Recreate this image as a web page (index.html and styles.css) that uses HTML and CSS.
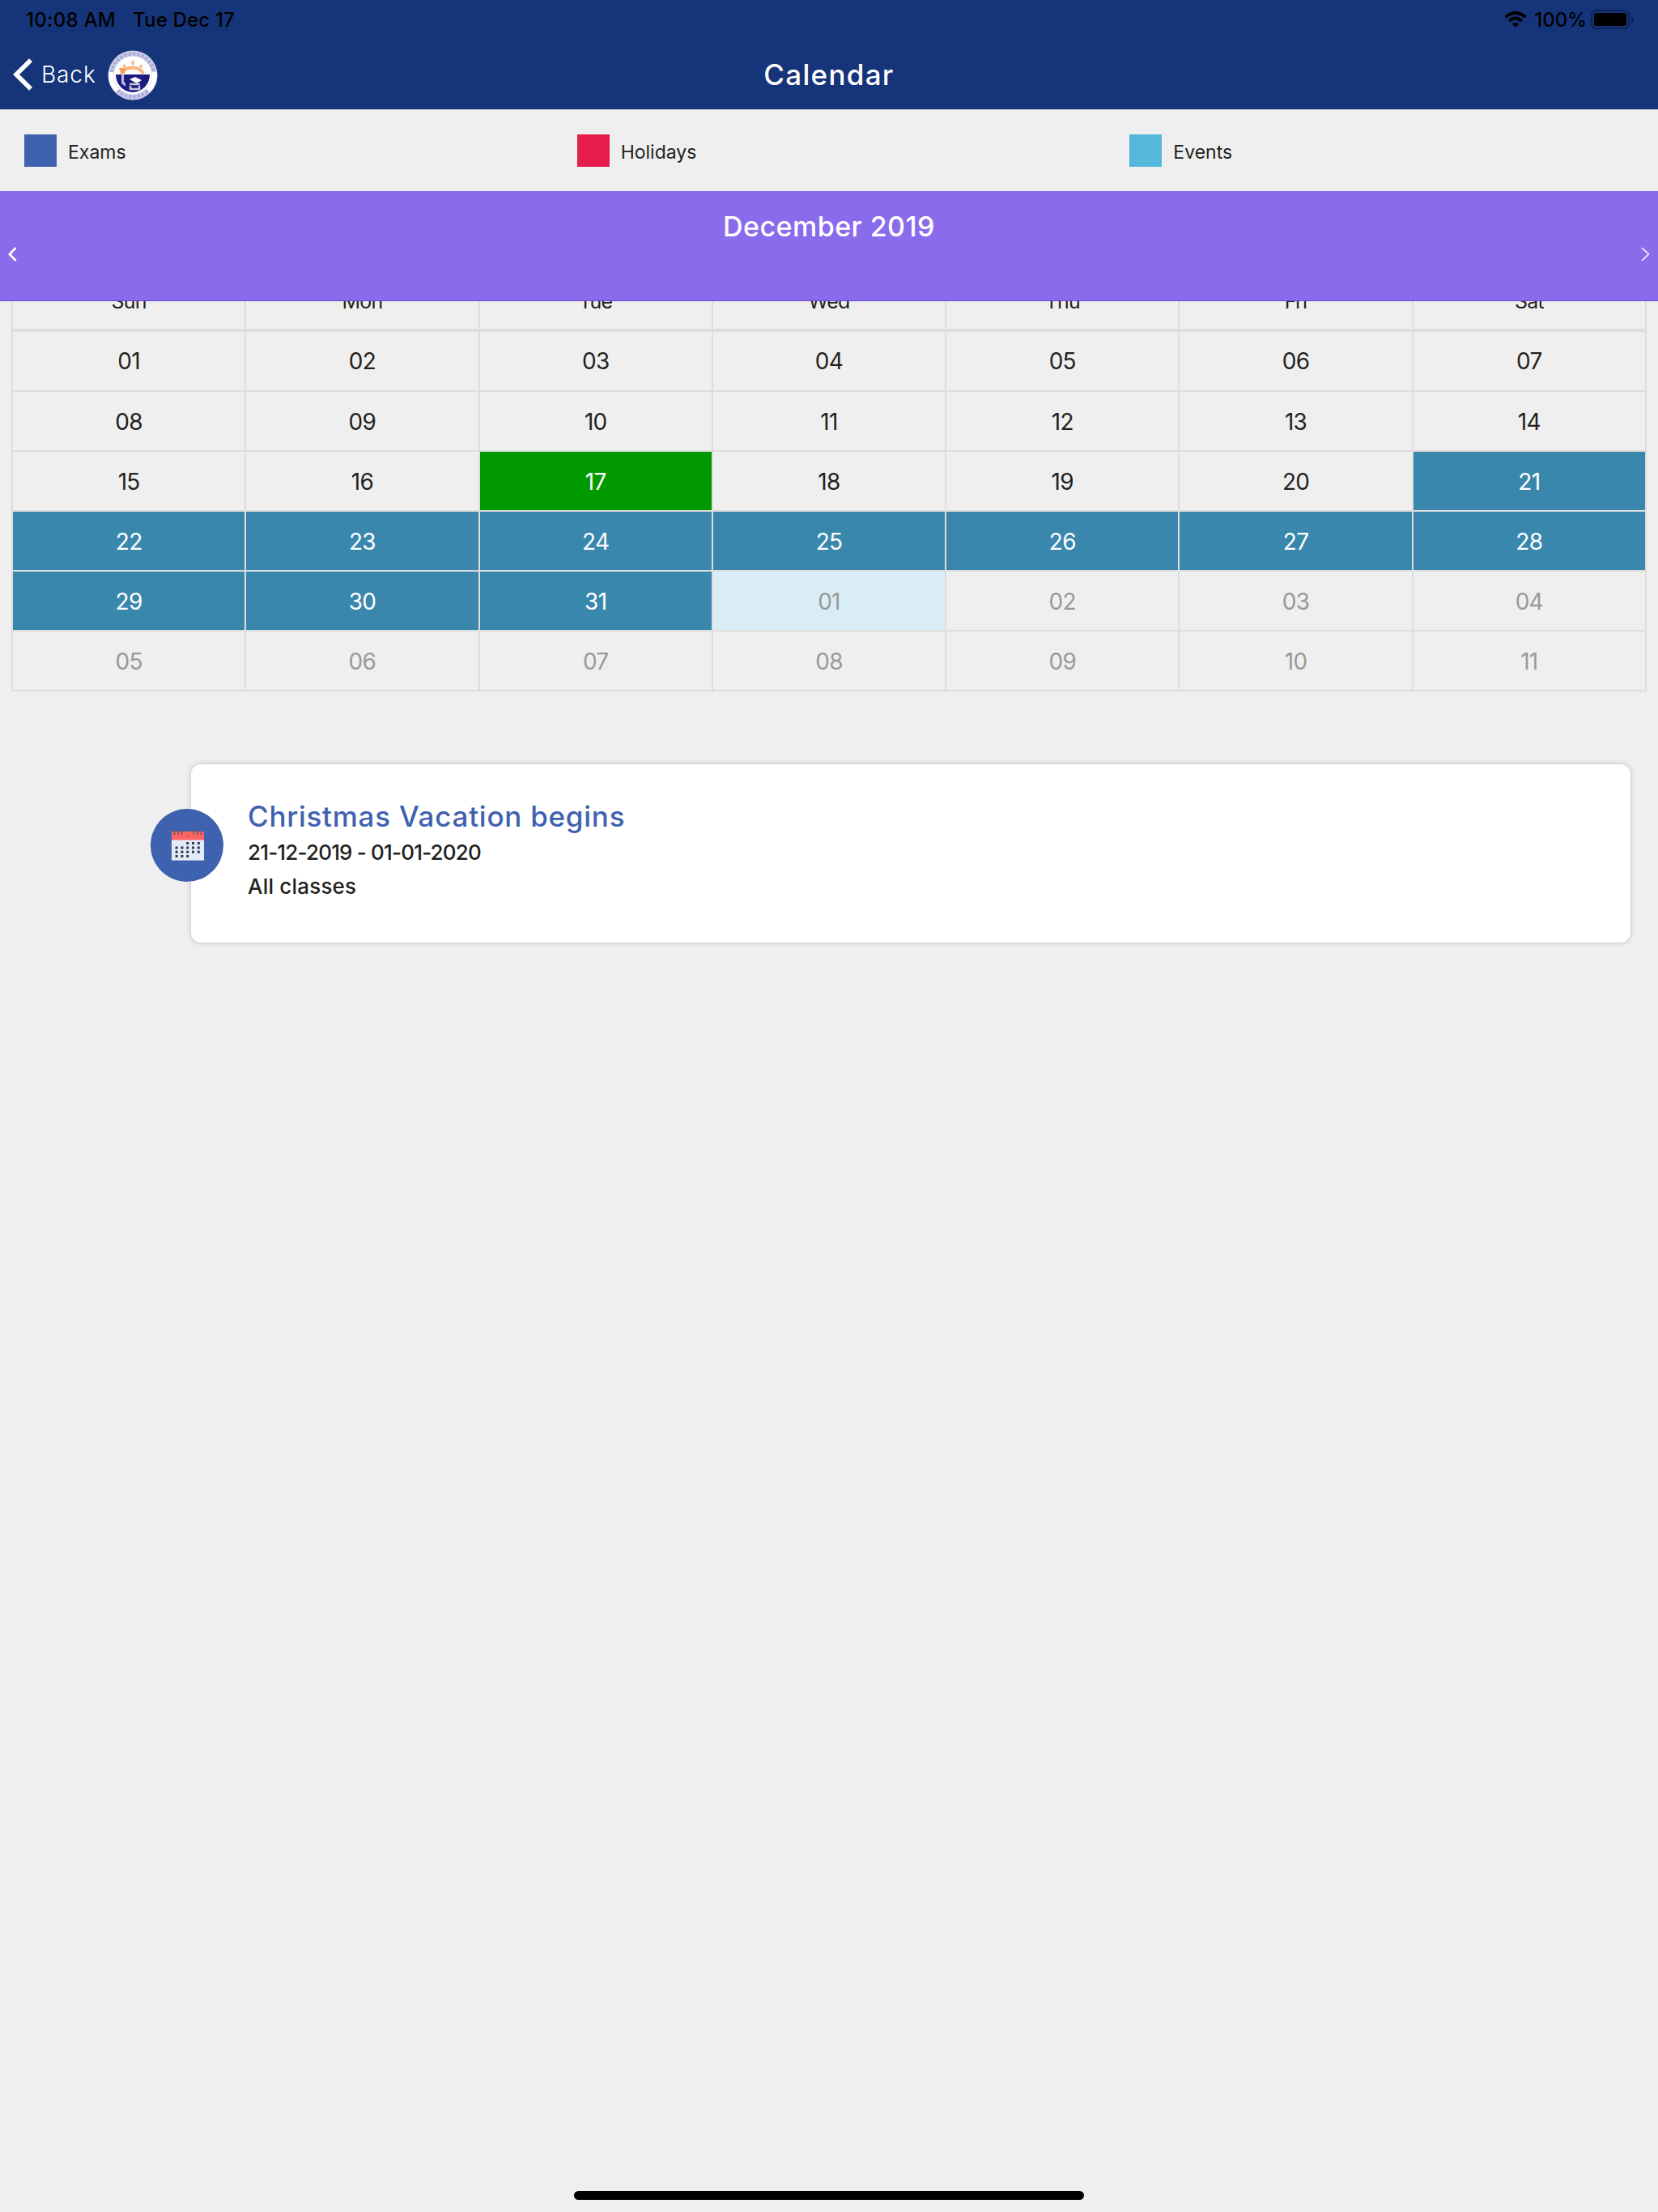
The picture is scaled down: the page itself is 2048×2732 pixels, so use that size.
FILE: index.html
```html
<!DOCTYPE html>
<html lang="en">
<head>
    <title>Calendar</title>
    <meta charset="UTF-8">
    <link rel="stylesheet" href="styles.css">
</head>
<body>
    <header class="header">
        <div class="status-bar">
            <span class="status-time">10:08 AM</span>
            <span class="status-date">Tue Dec 17</span>
            <svg class="wifi" width="28" height="20" viewBox="0 0 28 20">
                <path d="M1.6 7.2Q14 -3.2 26.4 7.2" fill="none" stroke="#000" stroke-width="4"/>
                <path d="M6.2 12Q14 5.2 21.8 12" fill="none" stroke="#000" stroke-width="3.8"/>
                <path d="M9.8 15.6Q14 12.2 18.2 15.6L14 20Z"/>
            </svg>
            <span class="status-percent">100%</span>
            <svg class="battery" width="53" height="24" viewBox="0 0 53 24">
                <rect x="1" y="1" width="46" height="22" rx="6" fill="none" stroke="#0e2254" stroke-width="2"/>
                <rect x="4" y="4" width="40" height="16" rx="3"/>
                <path d="M50 8Q53 9 53 12T50 16Z" fill="#0e2254"/>
            </svg>
        </div>
        <div class="nav">
            <a class="nav-back" href="#">
                <svg width="24" height="40" viewBox="0 0 24 40">
                    <path d="M22 2.3L4 20L22 37.7" fill="none" stroke="#fff" stroke-width="5.6"/>
                </svg>
                <span class="back-label">Back</span>
                <svg class="logo" width="62" height="62" viewBox="0 0 62 62">
                    <circle cx="31" cy="31" r="30.5" fill="#c9cbe6"/>
                    <circle cx="31" cy="31" r="26.5" fill="none" stroke="#a6a8d6" stroke-width="4" stroke-dasharray="3 2.4"/>
                    <circle cx="31" cy="31" r="23.5" fill="#fff"/>
                    <path d="M4.5 27A27 27 0 0 0 12 50" fill="none" stroke="#fff" stroke-width="6"/>
                    <path d="M57.5 27A27 27 0 0 1 50 50" fill="none" stroke="#fff" stroke-width="6"/>
                    <path d="M17 29A14.5 12 0 0 1 44 29" fill="none" stroke="#fbb27c" stroke-width="4"/>
                    <path d="M20 18l2 4M31 13v5M42 18l-2 4" stroke="#fbb27c" stroke-width="3"/>
                    <path d="M14 22h7v6l-4 2z" fill="#f99a50"/>
                    <path d="M10 30H52A21 22 0 0 1 10 30Z" fill="#1b1b80"/>
                    <path d="M17 30v11l5 4v-4l-2-2v-9z" fill="#b9bbe0"/>
                    <path d="M27 36l7-3 8 4-6 4z" fill="#fff"/>
                    <path d="M27 42h13M28 44v4h11v-4" fill="none" stroke="#c8c8d8" stroke-width="2.5"/>
                </svg>
            </a>
            <h1 class="nav-title">Calendar</h1>
        </div>
    </header>

    <div class="legend">
        <div class="legend-item"><span class="swatch exams"></span><span class="legend-label">Exams</span></div>
        <div class="legend-item"><span class="swatch holidays"></span><span class="legend-label">Holidays</span></div>
        <div class="legend-item"><span class="swatch events"></span><span class="legend-label">Events</span></div>
    </div>

    <div class="month-bar">
        <svg width="11" height="18" viewBox="0 0 11 18">
            <path d="M9.5 1L1.8 9L9.5 17" fill="none" stroke="#fff" stroke-width="2.6"/>
        </svg>
        <h2 class="month-title">December 2019</h2>
        <svg width="11" height="18" viewBox="0 0 11 18">
            <path d="M1 1L9.5 9L1 17" fill="none" stroke="#fff" stroke-width="1.5"/>
        </svg>
    </div>

    <div class="calendar">
        <div class="weekdays">
            <div>Sun</div>
            <div>Mon</div>
            <div>Tue</div>
            <div>Wed</div>
            <div>Thu</div>
            <div>Fri</div>
            <div>Sat</div>
        </div>
        <div class="days">
            <div class="day">01</div>
            <div class="day">02</div>
            <div class="day">03</div>
            <div class="day">04</div>
            <div class="day">05</div>
            <div class="day">06</div>
            <div class="day">07</div>

            <div class="day">08</div>
            <div class="day">09</div>
            <div class="day">10</div>
            <div class="day">11</div>
            <div class="day">12</div>
            <div class="day">13</div>
            <div class="day">14</div>

            <div class="day">15</div>
            <div class="day">16</div>
            <div class="day today">17</div>
            <div class="day">18</div>
            <div class="day">19</div>
            <div class="day">20</div>
            <div class="day marked">21</div>

            <div class="day marked">22</div>
            <div class="day marked">23</div>
            <div class="day marked">24</div>
            <div class="day marked">25</div>
            <div class="day marked">26</div>
            <div class="day marked">27</div>
            <div class="day marked">28</div>

            <div class="day marked">29</div>
            <div class="day marked">30</div>
            <div class="day marked">31</div>
            <div class="day other marked-other">01</div>
            <div class="day other">02</div>
            <div class="day other">03</div>
            <div class="day other">04</div>

            <div class="day other">05</div>
            <div class="day other">06</div>
            <div class="day other">07</div>
            <div class="day other">08</div>
            <div class="day other">09</div>
            <div class="day other">10</div>
            <div class="day other">11</div>
        </div>
    </div>

    <div class="event-card">
        <div class="event-badge">
            <svg width="40" height="38" viewBox="0 0 40 38">
                <rect y="2" width="40" height="36" fill="#e4eaf8"/>
                <rect y="2" width="40" height="10.5" fill="#ff6464"/>
                <path d="M0 37.5h40" stroke="#b4c0e0"/>
                <path d="M3.5 0v6M8 0v6M12.5 0v6M27.5 0v6M32 0v6M36.5 0v6" stroke="#6b5860" stroke-width="1.6"/>
                <path d="M17 7.5h6" stroke="#d8434e" stroke-width="1"/>
                <g fill="none" stroke="#2b3b4e" stroke-width="3" stroke-dasharray="3 3.8">
                    <path d="M18.2 16.6h18"/>
                    <path d="M4.6 21.9h32"/>
                    <path d="M4.6 27.2h32"/>
                    <path d="M4.6 32.5h17.5"/>
                </g>
            </svg>
        </div>
        <h3 class="event-title">Christmas Vacation begins</h3>
        <p class="event-dates">21-12-2019 - 01-01-2020</p>
        <p class="event-classes">All classes</p>
    </div>

    <div class="home-indicator"></div>
</body>
</html>
```
FILE: styles.css
```css
* {
    margin: 0;
    padding: 0;
    box-sizing: border-box;
}

body {
    font-family: 'Inter', sans-serif;
    background: #efefef;
    color: #231f20;
    min-height: 2732px;
}

svg {
    display: block;
    flex-shrink: 0;
}

.header {
    background: #163479;
    height: 136px;
    border-bottom: 1px solid #d8dce2;
}

.status-bar {
    display: flex;
    align-items: center;
    height: 48px;
    padding: 0 30px 0 32px;
    color: #000;
    font-size: 24px;
    font-weight: 500;
}

.status-time {
    letter-spacing: 0.3px;
}

.status-date {
    margin-left: 21px;
    letter-spacing: 0.17px;
}

.wifi {
    margin-left: auto;
}

.status-percent {
    margin: 0 5px 0 9px;
}

.nav {
    display: grid;
    grid-template-columns: 1fr auto 1fr;
    align-items: center;
    height: 87px;
    padding: 0 16px;
    color: white;
}

.nav-back {
    display: flex;
    align-items: center;
    color: white;
    text-decoration: none;
}

.back-label {
    margin: 0 14px 0 11px;
    padding-top: 1px;
    font-size: 28px;
    font-weight: 300;
    letter-spacing: 0.9px;
}

.logo {
    margin-top: 2px;
}

.nav-title {
    font-size: 35px;
    font-weight: 500;
    letter-spacing: 1.3px;
}

.legend {
    display: grid;
    grid-template-columns: repeat(3, 1fr);
    height: 100px;
}

.legend-item {
    display: flex;
    align-items: center;
    padding-left: 30px;
}

.swatch {
    width: 40px;
    height: 40px;
    margin-right: 14px;
}

.swatch.exams {
    background: #3f62b0;
}

.swatch.holidays {
    background: #e61c4d;
}

.swatch.events {
    background: #53b8db;
}

.legend-label {
    padding-top: 4px;
    font-size: 23px;
}

.month-bar {
    position: relative;
    z-index: 1;
    display: flex;
    justify-content: space-between;
    align-items: center;
    height: 136px;
    padding: 20px 10px 0;
    background: #8a6bec;
    border-bottom: 1px solid #6e46d8;
    color: white;
}

.month-title {
    align-self: flex-start;
    font-size: 34px;
    line-height: 48px;
    font-weight: 500;
    letter-spacing: 0.45px;
}

/* the weekday row slides under the month bar */
.calendar {
    margin: -36px 14px 0;
    background: #ddd;
    text-align: center;
}

.weekdays,
.days {
    display: grid;
    grid-template-columns: repeat(7, 1fr);
    gap: 2px;
    padding: 0 2px;
}

.weekdays {
    border-bottom: 4px solid #ddd;
    font-size: 25px;
    line-height: 70px;
    letter-spacing: -0.8px;
}

.weekdays div {
    height: 70px;
    padding-top: 1px;
    background: #efefef;
}

.days {
    padding-bottom: 2px;
}

.day {
    height: 72px;
    background: #efefef;
    font-size: 28px;
    line-height: 75px;
    letter-spacing: -0.7px;
}

.day:nth-child(-n+7) {
    line-height: 73px;
}

.day.today {
    background: #009900;
    color: white;
}

.day.marked {
    background: #3a87ad;
    color: white;
}

.day.other {
    color: #999;
}

.day.marked-other {
    background: #d9edf7;
}

.event-card {
    position: relative;
    height: 220px;
    margin: 90px 34px 0 236px;
    padding: 41px 70px;
    background: white;
    border-radius: 12px;
    box-shadow: 0 0 6px rgba(0, 0, 0, 0.22);
}

.event-badge {
    position: absolute;
    top: 55px;
    left: -50px;
    display: flex;
    align-items: center;
    justify-content: center;
    width: 90px;
    height: 90px;
    padding-left: 2px;
    border-radius: 50%;
    background: #3f62b0;
}

.event-title {
    margin-bottom: 1px;
    color: #3f62b0;
    font-size: 35px;
    line-height: 46px;
    font-weight: 500;
    letter-spacing: 0.75px;
}

.event-dates,
.event-classes {
    font-size: 26px;
    line-height: 42px;
    font-weight: 500;
}

.event-dates {
    letter-spacing: -0.82px;
}

.event-classes {
    letter-spacing: 0.2px;
}

.home-indicator {
    position: fixed;
    bottom: 15px;
    left: 50%;
    width: 630px;
    height: 11px;
    margin-left: -315px;
    border-radius: 6px;
    background: #000;
}
```
